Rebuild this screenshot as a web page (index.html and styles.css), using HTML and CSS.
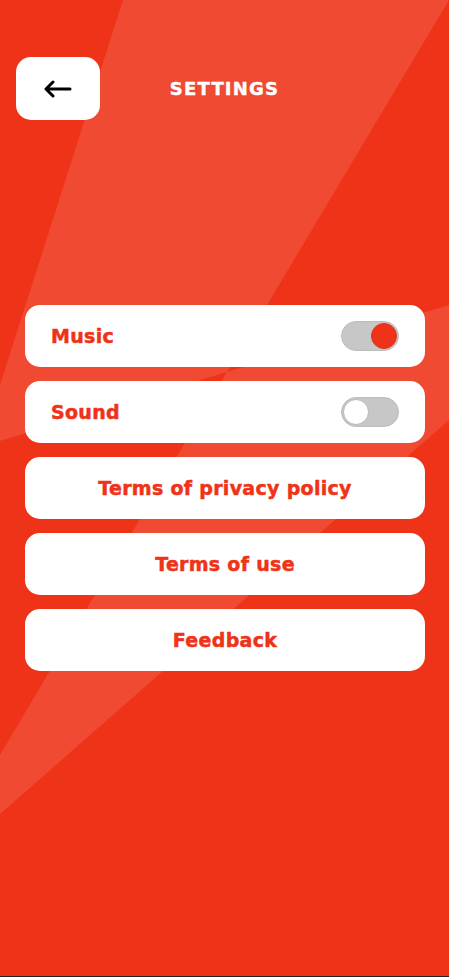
FILE: index.html
```html
<!DOCTYPE html>
<html lang="en">
<head>
  <meta charset="UTF-8">
  <title>Settings</title>
  <link rel="stylesheet" href="styles.css">
</head>
<body>
  <div class="screen">
    <!-- decorative light bands behind everything -->
    <svg class="backdrop" viewBox="0 0 449 977" preserveAspectRatio="none" aria-hidden="true">
      <polygon points="123,0 449,0 227,372 0,441 0,385" />
      <polygon points="227,372 449,305 449,420 0,814 0,755" />
    </svg>

    <header class="topbar">
      <button class="back-btn" aria-label="Back">
        <svg width="30" height="18" viewBox="0 0 30 18">
          <path d="M28 9H4M11 2L4 9l7 7" fill="none" stroke="#000" stroke-width="3" stroke-linecap="round" stroke-linejoin="round"/>
        </svg>
      </button>
      <h1 class="title">SETTINGS</h1>
      <span></span>
    </header>

    <div class="menu">
      <div class="row">
        <span>Music</span>
        <span class="toggle on"><span class="knob"></span></span>
      </div>
      <div class="row">
        <span>Sound</span>
        <span class="toggle"><span class="knob"></span></span>
      </div>
      <button class="row link">Terms of privacy policy</button>
      <button class="row link">Terms of use</button>
      <button class="row link">Feedback</button>
    </div>
  </div>
</body>
</html>
```

FILE: styles.css
```css
body {
  margin: 0;
  background-color: #ef3318;
  font-family: "DejaVu Sans", Arial, sans-serif;
}
.screen {
  position: relative;
  height: 976px;
  overflow: hidden;
  background-color: #ef3318;
  border-bottom: 1px solid #222;
}
.backdrop {
  position: absolute;
  top: 0;
  left: 0;
  width: 449px;
  height: 977px;
  fill: #f14a33;
}
.topbar {
  position: relative;
  display: grid;
  grid-template-columns: 84px 1fr 84px;
  align-items: center;
  padding: 57px 16px 0;
}
.back-btn {
  height: 63px;
  border: none;
  border-radius: 15px;
  background-color: #fff;
  display: flex;
  align-items: center;
  justify-content: center;
  padding: 0 3px 0 0;
  cursor: pointer;
}
.title {
  margin: 0;
  text-align: center;
  color: #fff;
  font-size: 18px;
  font-weight: bold;
  letter-spacing: 1.2px;
  -webkit-text-stroke: 0.4px #fff;
}
.menu {
  position: relative;
  display: flex;
  flex-direction: column;
  gap: 14px;
  margin: 185px 24px 0 25px;
}
.row {
  height: 62px;
  box-sizing: border-box;
  display: flex;
  align-items: center;
  justify-content: space-between;
  padding: 0 26px;
  border: none;
  border-radius: 15px;
  background-color: #fff;
  color: #ef3318;
  font-family: inherit;
  font-size: 19px;
  font-weight: bold;
  letter-spacing: 0.3px;
  -webkit-text-stroke: 0.5px #ef3318;
}
.link {
  justify-content: center;
  width: 100%;
  cursor: pointer;
}
/* toggles */
.toggle {
  width: 58px;
  height: 30px;
  box-sizing: border-box;
  border-radius: 15px;
  background-color: #c7c7c7;
  border: 1px solid #bdbdbd;
  padding: 1px;
  display: flex;
}
.knob {
  width: 26px;
  height: 26px;
  box-sizing: border-box;
  border-radius: 50%;
  background-color: #fff;
  border: 1px solid #b9b9b9;
}
.toggle.on {
  justify-content: flex-end;
}
.toggle.on .knob {
  background-color: #ef3318;
  border-color: #e0301a;
}
```
